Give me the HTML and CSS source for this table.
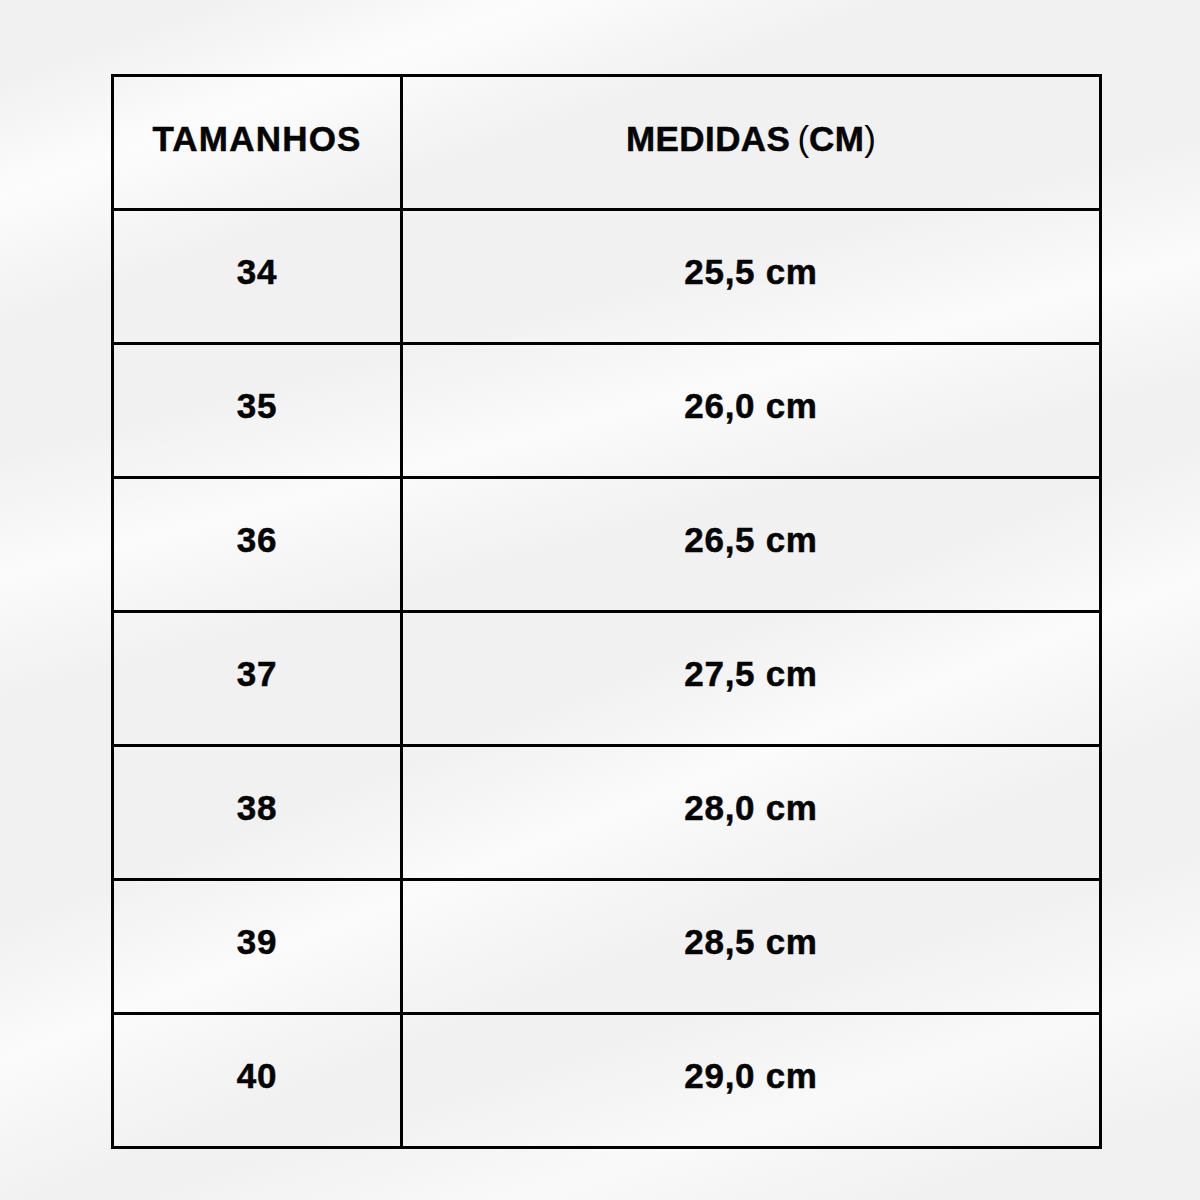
FILE: index.html
```html
<!DOCTYPE html>
<html lang="pt">
<head>
<meta charset="utf-8">
<title>Tabela de medidas</title>
<link rel="stylesheet" href="styles.css">
</head>
<body>
<main class="page">
  <div class="chart">
    <div class="cell head"><span>TAMANHOS</span></div>
    <div class="cell head head-wide"><span>MEDIDAS <span class="paren">(</span>CM<span class="paren">)</span></span></div>
    <div class="cell"><span>34</span></div><div class="cell"><span>25,5 cm</span></div>
    <div class="cell"><span>35</span></div><div class="cell"><span>26,0 cm</span></div>
    <div class="cell"><span>36</span></div><div class="cell"><span>26,5 cm</span></div>
    <div class="cell"><span>37</span></div><div class="cell"><span>27,5 cm</span></div>
    <div class="cell"><span>38</span></div><div class="cell"><span>28,0 cm</span></div>
    <div class="cell"><span>39</span></div><div class="cell"><span>28,5 cm</span></div>
    <div class="cell"><span>40</span></div><div class="cell"><span>29,0 cm</span></div>
  </div>
</main>
</body>
</html>
```

FILE: styles.css
```css
html, body {
  margin: 0;
  padding: 0;
}
body {
  width: 1200px;
  height: 1200px;
  background-color: #f1f1f1;
  background-image:
    linear-gradient(160deg, rgba(255,255,255,0) 5%, rgba(255,255,255,0.8) 12%, rgba(255,255,255,0) 20%),
    linear-gradient(165deg, rgba(255,255,255,0) 30%, rgba(255,255,255,0.7) 38%, rgba(255,255,255,0) 46%),
    linear-gradient(158deg, rgba(255,255,255,0) 55%, rgba(255,255,255,0.7) 63%, rgba(255,255,255,0) 72%),
    linear-gradient(162deg, rgba(255,255,255,0) 78%, rgba(255,255,255,0.6) 86%, rgba(255,255,255,0) 94%);
  font-family: "Liberation Sans", Arial, sans-serif;
  color: #050505;
  overflow: hidden;
}
.page {
  padding: 74px 0 0 111px;
}
.chart {
  display: grid;
  grid-template-columns: 289px 699px;
  grid-auto-rows: 134px;
  border-top: 3px solid #000;
  border-left: 3px solid #000;
  width: 988px;
}
.cell {
  box-sizing: border-box;
  border-right: 3px solid #000;
  border-bottom: 3px solid #000;
  display: flex;
  align-items: center;
  justify-content: center;
  font-weight: 700;
  font-size: 35px;
  letter-spacing: 0.7px;
  padding-bottom: 9px;
  -webkit-text-stroke: 0.5px #050505;
}
.head {
  font-size: 35px;
  letter-spacing: 1.2px;
  padding-bottom: 7px;
}
.head-wide {
  letter-spacing: 0.4px;
  word-spacing: -3px;
}
.paren {
  font-weight: 400;
  -webkit-text-stroke: 0;
  letter-spacing: 0;
}
```
